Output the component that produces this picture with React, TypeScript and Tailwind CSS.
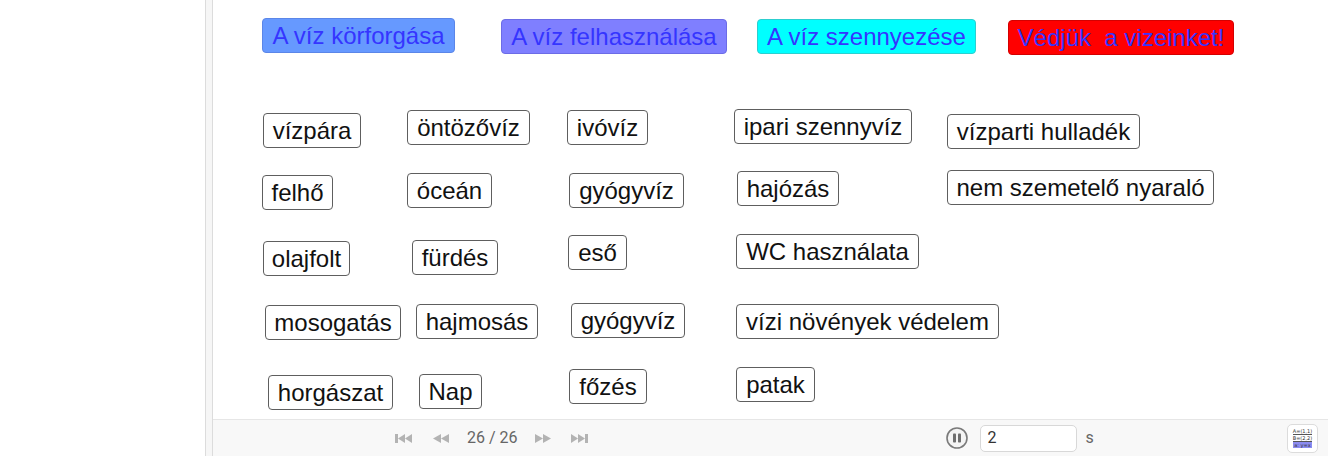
import React from "react";

type Tile = { label: string; x: number; y: number; w: number };

// canvas starts at page x = 213
const OX = 213;

const headers = [
  { label: "A víz körforgása", x: 262, y: 18, w: 193, cls: "bg-[#6699ff] border-[#5b86e8]" },
  { label: "A víz felhasználása", x: 501, y: 19, w: 226, cls: "bg-[#7f7fff] border-[#6c6ce6]" },
  { label: "A víz szennyezése", x: 757, y: 19, w: 219, cls: "bg-[#00ffff] border-[#2ccfcf]" },
  { label: "Védjük  a vizeinket!", x: 1008, y: 20, w: 226, cls: "bg-[#ff0000] border-[#d40000]" },
];

const tiles: Tile[] = [
  { label: "vízpára", x: 263, y: 113, w: 98 },
  { label: "öntözővíz", x: 407, y: 110, w: 123 },
  { label: "ivóvíz", x: 567, y: 110, w: 81 },
  { label: "ipari szennyvíz", x: 734, y: 109, w: 178 },
  { label: "vízparti hulladék", x: 947, y: 114, w: 193 },
  { label: "felhő", x: 262, y: 175, w: 71 },
  { label: "óceán", x: 407, y: 173, w: 85 },
  { label: "gyógyvíz", x: 569, y: 173, w: 115 },
  { label: "hajózás", x: 737, y: 171, w: 102 },
  { label: "nem szemetelő nyaraló", x: 947, y: 170, w: 267 },
  { label: "olajfolt", x: 263, y: 241, w: 87 },
  { label: "fürdés", x: 412, y: 240, w: 86 },
  { label: "eső", x: 568, y: 235, w: 59 },
  { label: "WC használata", x: 736, y: 234, w: 183 },
  { label: "mosogatás", x: 265, y: 305, w: 136 },
  { label: "hajmosás", x: 416, y: 304, w: 122 },
  { label: "gyógyvíz", x: 571, y: 303, w: 114 },
  { label: "vízi növények védelem", x: 736, y: 304, w: 263 },
  { label: "horgászat", x: 268, y: 375, w: 125 },
  { label: "Nap", x: 419, y: 374, w: 63 },
  { label: "főzés", x: 569, y: 369, w: 78 },
  { label: "patak", x: 736, y: 367, w: 79 },
];

const SkipIcon = ({ flip = false, bar = false }: { flip?: boolean; bar?: boolean }) => (
  <svg width="17" height="9" viewBox="0 0 17 9" className={flip ? "-scale-x-100" : ""}>
    {bar ? (
      <>
        <rect x="0" y="0" width="3" height="9" fill="#b3b3b3" />
        <polygon points="3,4.5 10,0 10,9" fill="#b3b3b3" />
        <polygon points="10,4.5 17,0 17,9" fill="#b3b3b3" />
      </>
    ) : (
      <>
        <polygon points="1,4.5 9,0 9,9" fill="#b3b3b3" />
        <polygon points="9,4.5 17,0 17,9" fill="#b3b3b3" />
      </>
    )}
  </svg>
);

export default function App() {
  return (
    <div className="flex h-[456px] w-[1328px] overflow-hidden bg-white font-['Liberation_Sans',Arial,sans-serif]">
      {/* left empty panel + splitter */}
      <div className="w-[205px] shrink-0 bg-white" />
      <div className="w-[8px] shrink-0 border-x border-[#dcdcdc] bg-[#f6f6f6]" />

      <div className="flex flex-1 flex-col">
        <div className="relative flex-1">
          {headers.map((h) => (
            <div
              key={h.label}
              className={`absolute h-[35px] whitespace-pre rounded-[4px] border text-center text-[24px] leading-[33px] text-[#3535ff] ${h.cls}`}
              style={{ left: h.x - OX, top: h.y, width: h.w }}
            >
              {h.label}
            </div>
          ))}
          {tiles.map((t, i) => (
            <div
              key={i}
              className="absolute h-[35px] whitespace-nowrap rounded-[4px] border border-[#5e5e5e] bg-white text-center text-[24px] leading-[33px] text-[#111]"
              style={{ left: t.x - OX, top: t.y, width: t.w }}
            >
              {t.label}
            </div>
          ))}
        </div>

        {/* playback bar */}
        <div className="flex h-[37px] shrink-0 items-center border-t border-[#e6e6e6] bg-[#f8f8f8] font-['Roboto',sans-serif]">
          <div className="ml-[182px] flex items-center">
            <SkipIcon bar />
            <div className="ml-[20px]">
              <SkipIcon />
            </div>
            <span className="ml-[18px] whitespace-nowrap text-[16px] leading-none text-[#666]">26 / 26</span>
            <div className="ml-[17px]">
              <SkipIcon flip />
            </div>
            <div className="ml-[19px]">
              <SkipIcon flip bar />
            </div>
          </div>

          <div className="ml-[358px] flex items-center">
            <svg width="22" height="22" viewBox="0 0 22 22">
              <circle cx="11" cy="11" r="10" fill="#f4f4f4" stroke="#7a7a7a" strokeWidth="1.6" />
              <rect x="7" y="6.5" width="3" height="9" rx="0.8" fill="#6f6f6f" />
              <rect x="12" y="6.5" width="3" height="9" rx="0.8" fill="#6f6f6f" />
            </svg>
            <div className="ml-[12px] flex h-[27px] w-[97px] items-center rounded-[5px] border border-[#d8d8d8] bg-white pl-[7px] text-[16px] text-[#333]">
              2
            </div>
            <span className="ml-[9px] text-[16px] text-[#666]">s</span>
          </div>

          <div className="ml-auto mr-[10px] flex h-[29px] w-[31px] flex-col items-center justify-center rounded-[5px] border border-[#dcdcdc] bg-white font-['DejaVu_Sans',sans-serif] text-[5px] leading-[6px] text-[#333]">
            <span className="border-b border-[#555]">A=(1,1)</span>
            <span className="border-b border-[#555]">B=(2,2)</span>
            <span className="bg-[#8c8cf0] px-[1px]">a: y=x</span>
          </div>
        </div>
      </div>
    </div>
  );
}
